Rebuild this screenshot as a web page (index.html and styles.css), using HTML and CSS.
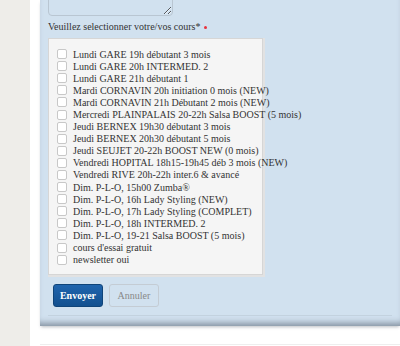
FILE: index.html
```html
<!DOCTYPE html>
<html lang="fr">
<head>
  <meta charset="UTF-8" />
  <title>Inscription cours</title>
  <link rel="stylesheet" href="styles.css">
</head>
<body>
  <div class="page">
    <form class="panel">
      <textarea class="message"></textarea>

      <p class="label">Veuillez selectionner votre/vos cours* <span class="req"></span></p>

      <div class="choices">
        <label><input type="checkbox"> Lundi GARE 19h débutant 3 mois</label>
        <label><input type="checkbox"> Lundi GARE 20h INTERMED. 2</label>
        <label><input type="checkbox"> Lundi GARE 21h débutant 1</label>
        <label><input type="checkbox"> Mardi CORNAVIN 20h initiation 0 mois (NEW)</label>
        <label><input type="checkbox"> Mardi CORNAVIN 21h Débutant 2 mois (NEW)</label>
        <label><input type="checkbox"> Mercredi PLAINPALAIS 20-22h Salsa BOOST (5 mois)</label>
        <label><input type="checkbox"> Jeudi BERNEX 19h30 débutant 3 mois</label>
        <label><input type="checkbox"> Jeudi BERNEX 20h30 débutant 5 mois</label>
        <label><input type="checkbox"> Jeudi SEUJET 20-22h BOOST NEW (0 mois)</label>
        <label><input type="checkbox"> Vendredi HOPITAL 18h15-19h45 déb 3 mois (NEW)</label>
        <label><input type="checkbox"> Vendredi RIVE 20h-22h inter.6 &amp; avancé</label>
        <label><input type="checkbox"> Dim. P-L-O, 15h00 Zumba®</label>
        <label><input type="checkbox"> Dim. P-L-O, 16h Lady Styling (NEW)</label>
        <label><input type="checkbox"> Dim. P-L-O, 17h Lady Styling (COMPLET)</label>
        <label><input type="checkbox"> Dim. P-L-O, 18h INTERMED. 2</label>
        <label><input type="checkbox"> Dim. P-L-O, 19-21 Salsa BOOST (5 mois)</label>
        <label><input type="checkbox"> cours d'essai gratuit</label>
        <label><input type="checkbox"> newsletter oui</label>
      </div>

      <div class="actions">
        <button type="submit" class="btn-send">Envoyer</button>
        <button type="reset" class="btn-cancel">Annuler</button>
      </div>

      <div class="rule"></div>
    </form>
    <div class="below"></div>
  </div>
</body>
</html>
```

FILE: styles.css
```css
/* Page frame */
body {
  margin: 0;
  font-family: 'Liberation Serif', 'Times New Roman', serif;
  background-color: #eeede9;
  color: #333;
  overflow: hidden;
}

.page {
  margin-left: 30px;
  padding-left: 10px;
  background-color: #fff;
  height: 346px;
}

.panel {
  display: flex;
  flex-direction: column;
  align-items: flex-start;
  height: 326px;
  padding: 0 8px;
  box-sizing: border-box;
  background-color: #d1e1ef;
  /* darker band fading into the panel bottom */
  box-shadow: inset 0 -7px 6px -4px rgba(70,80,95,0.55), 0 2px 3px -1px rgba(60,70,85,0.35);
}

.message {
  width: 125px;
  height: 40px;
  margin: -24px 0 0 0;
  padding: 0;
  border: 1px solid #b9c6d2;
  border-radius: 4px;
  background-color: #d1e1ef;
  box-sizing: border-box;
}

.label {
  display: flex;
  align-items: center;
  gap: 4px;
  margin: 4px 0 0 0;
  font-size: 10px;
  line-height: 14px;
}

.req {
  width: 3px;
  height: 3px;
  border-radius: 50%;
  background-color: #e8323c;
}

/* Checkbox list */
.choices {
  display: flex;
  flex-direction: column;
  width: 215px;
  margin-top: 4px;
  padding: 9px 0 8px 8px;
  box-sizing: border-box;
  background-color: #f5f5f5;
  border: 1px solid #d6d6d6;
  box-shadow: 1px 1px 0 1px #e2e2e2;
}

.choices label {
  display: flex;
  align-items: center;
  gap: 6px;
  height: 12.1px;
  font-size: 10px;
  white-space: nowrap;
  color: #333;
}

.choices input {
  appearance: none;
  width: 10px;
  height: 10px;
  margin: 0;
  border: 1px solid #c8c8c8;
  border-radius: 2px;
  background-color: #fff;
  flex: none;
}

/* Buttons */
.actions {
  display: flex;
  gap: 6px;
  margin: 9px 0 0 5px;
}

.actions button {
  width: 50px;
  height: 23px;
  border-radius: 3px;
  font-family: inherit;
  font-size: 10px;
  padding: 0;
}

.btn-send {
  background: linear-gradient(#1f64ad, #12508f);
  border: 1px solid #0f4479;
  color: #fff;
  font-weight: bold;
}

.btn-cancel {
  background-color: #d1e1ef;
  border: 1px solid #c4ccd4;
  color: #888;
}

.rule {
  align-self: stretch;
  margin-top: auto;
  margin-bottom: 10px;
  border-top: 1px solid #c3d2df;
}

.below {
  height: 18px;
  border-bottom: 1px solid #eeeeee;
}
```
